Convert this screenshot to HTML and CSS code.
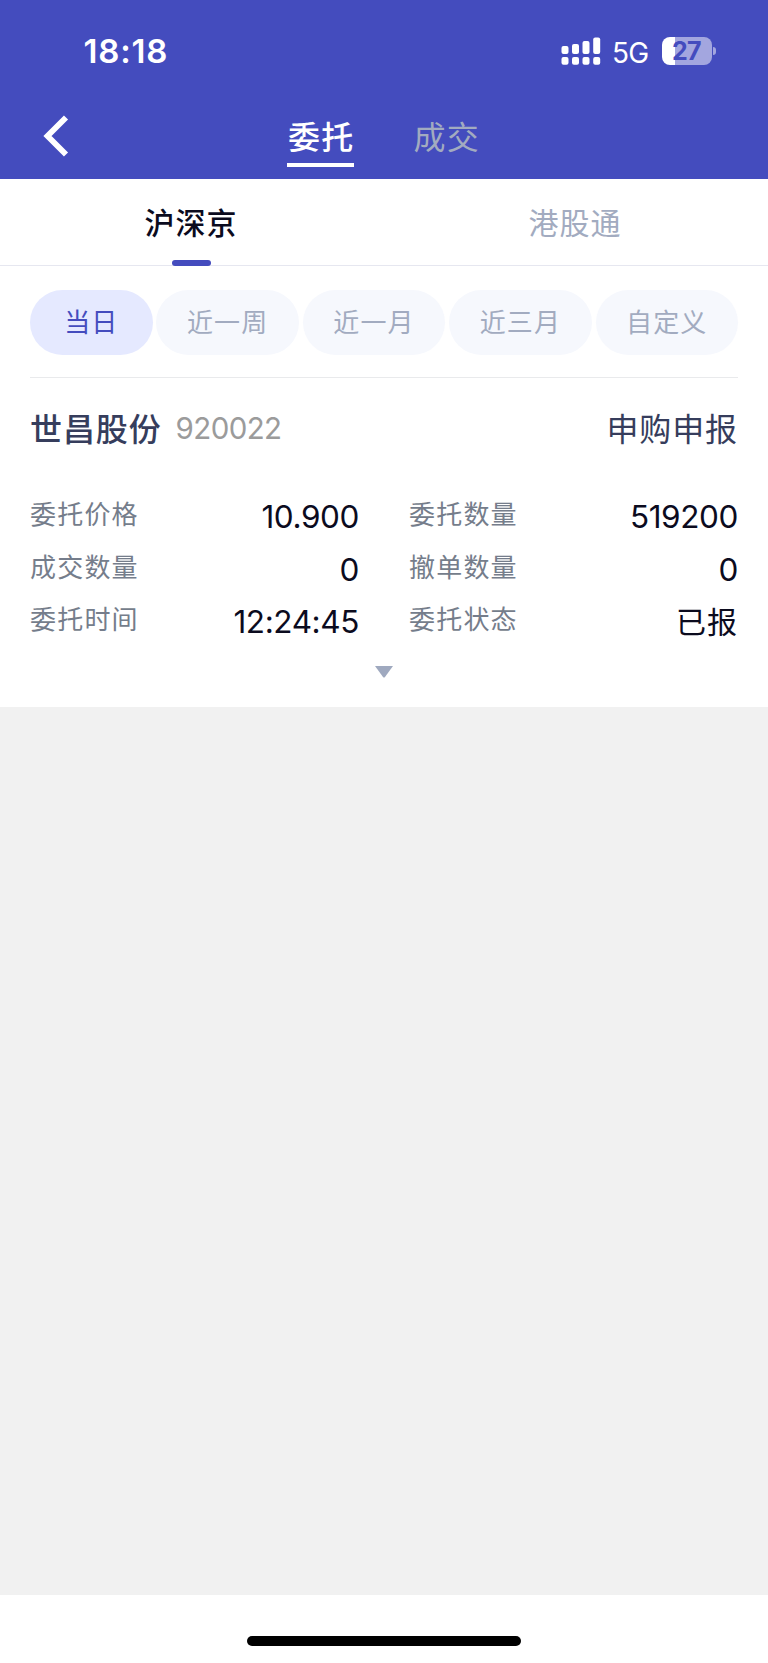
FILE: index.html
```html
<!DOCTYPE html>
<html lang="zh-CN">
<head>
    <meta charset="UTF-8">
    <meta name="viewport" content="width=device-width, initial-scale=1.0">
    <title>委托</title>
    <link rel="stylesheet" href="styles.css">
</head>
<body>
    <div class="page">
        <header class="header">
            <div class="status-bar">
                <span class="time">18:18</span>
                <div class="status-icons">
                    <svg class="signal" width="40" height="28" viewBox="0 0 40 28" fill="#fff">
                        <rect x="0.5" y="9" width="7" height="8" rx="2"/>
                        <rect x="11" y="7" width="7" height="10" rx="2"/>
                        <rect x="21.5" y="4" width="7" height="13" rx="2"/>
                        <rect x="32.2" y="0.5" width="7" height="16.5" rx="2"/>
                        <rect x="0.5" y="20" width="7" height="7.7" rx="2"/>
                        <rect x="11" y="20" width="7" height="7.7" rx="2"/>
                        <rect x="21.5" y="20" width="7" height="7.7" rx="2"/>
                        <rect x="32.2" y="20" width="7" height="7.7" rx="2"/>
                    </svg>
                    <span class="network">5G</span>
                    <div class="battery"><span>27</span></div>
                    <i class="battery-cap"></i>
                </div>
            </div>
            <nav class="nav">
                <svg class="back" width="26" height="42" viewBox="0 0 26 42">
                    <path d="M23 2.5 L4.5 21 L23 39.5" fill="none" stroke="#fff" stroke-width="5.8"/>
                </svg>
                <a class="nav-item active">委托</a>
                <a class="nav-item">成交</a>
            </nav>
        </header>

        <div class="tabs">
            <a class="tab active">沪深京</a>
            <a class="tab">港股通</a>
        </div>

        <div class="content">
            <div class="filters">
                <button class="chip short active">当日</button>
                <button class="chip">近一周</button>
                <button class="chip">近一月</button>
                <button class="chip">近三月</button>
                <button class="chip">自定义</button>
            </div>

            <div class="order-head">
                <span class="stock-name">世昌股份</span>
                <span class="stock-code">920022</span>
                <span class="order-type">申购申报</span>
            </div>

            <div class="order-grid">
                <div class="field"><span class="label">委托价格</span><span class="value">10.900</span></div>
                <div class="field"><span class="label">委托数量</span><span class="value">519200</span></div>
                <div class="field"><span class="label">成交数量</span><span class="value">0</span></div>
                <div class="field"><span class="label">撤单数量</span><span class="value">0</span></div>
                <div class="field"><span class="label">委托时间</span><span class="value">12:24:45</span></div>
                <div class="field"><span class="label">委托状态</span><span class="value cn">已报</span></div>
            </div>
            <svg class="expand" width="18" height="12" viewBox="0 0 18 12">
                <path d="M0 0H18L10 11Q9 12 8 11Z" fill="#9fa9bf"/>
            </svg>
        </div>

        <footer class="bottom"><div class="home-bar"></div></footer>
    </div>
</body>
</html>
```

FILE: styles.css
```css
:root {
    --primary: #444cbe;
    --muted: #a2abc0;
}

* {
    box-sizing: border-box;
}

body {
    margin: 0;
    font-family: Inter, 'Noto Sans CJK SC', sans-serif;
    background: #f1f1f1;
}

.page {
    display: flex;
    flex-direction: column;
    width: 768px;
    height: 1663px;
}

/* 顶部 */
.header {
    height: 179px;
    background: var(--primary);
    color: #fff;
}

.status-bar {
    display: flex;
    justify-content: space-between;
    align-items: center;
    height: 102px;
    padding: 0 52px 0 83.5px;
}

.time {
    font-size: 33px;
    font-weight: 600;
    letter-spacing: 0.8px;
}

.status-icons {
    display: flex;
    align-items: center;
}

.network {
    width: 37px;
    margin: 3px 13px 0 11px;
    font-size: 28px;
    letter-spacing: -0.8px;
}

.battery {
    display: flex;
    align-items: center;
    justify-content: center;
    width: 50px;
    height: 28px;
    border-radius: 8px;
    background: linear-gradient(90deg, #fff 13px, #a3a6df 13px);
    color: var(--primary);
    font-size: 25px;
    font-weight: 700;
    letter-spacing: -0.6px;
}

.battery span {
    margin-left: -1px;
}

.battery-cap {
    width: 3px;
    height: 8px;
    margin-left: 1px;
    border-radius: 0 4px 4px 0;
    background: #a3a6df;
}

.nav {
    display: flex;
    align-items: flex-start;
    height: 77px;
    padding: 13px 0 0 43px;
    line-height: 45px;
}

.nav-item {
    width: 67px;
    height: 52px;
    font-size: 32px;
    letter-spacing: 1.2px;
    padding-left: 1px;
    white-space: nowrap;
    color: #a2abc0;
}

.nav-item.active {
    margin: 0 58.5px 0 218px;
    border-bottom: 4px solid #fff;
    font-weight: 500;
    color: #fff;
}

/* 市场切换 */
.tabs {
    display: flex;
    height: 87px;
    background: #fff;
    border-bottom: 1px solid #e6e7f0;
}

.tab {
    display: flex;
    flex-direction: column;
    justify-content: space-between;
    align-items: center;
    flex: 1;
    height: 87px;
    padding: 22px 2px 0 0;
    line-height: 44px;
    font-size: 30px;
    letter-spacing: 1px;
    color: var(--muted);
}

.tab.active {
    color: #0b0b1e;
    font-weight: 500;
}

.tab.active::after {
    content: "";
    width: 39px;
    height: 6px;
    border-radius: 3px;
    background: var(--primary);
}

/* 委托列表 */
.content {
    height: 441px;
    padding: 24px 30px 0;
    background: #fff;
}

.filters {
    display: flex;
    justify-content: space-between;
    height: 88px;
    border-bottom: 1px solid #e9eaec;
}

.chip {
    width: 142.5px;
    height: 65px;
    padding: 0 0 4px;
    border: none;
    border-radius: 33px;
    background: #f6f8fd;
    color: var(--muted);
    font-family: inherit;
    font-size: 26px;
    letter-spacing: 1.1px;
}

.chip.short {
    width: 122.5px;
}

.chip.active {
    background: #e5e9ff;
    color: var(--primary);
}

.order-head {
    display: flex;
    align-items: center;
    height: 98px;
    color: #363d5c;
    font-size: 32px;
    letter-spacing: 0.9px;
}

.stock-name {
    font-weight: 500;
}

.stock-code {
    margin-left: 14px;
    padding-top: 2px;
    font-size: 29.5px;
    letter-spacing: -0.6px;
    color: #9b9b9b;
}

.order-type {
    margin-left: auto;
}

.order-grid {
    display: grid;
    grid-template-columns: 329px 329px;
    column-gap: 50px;
    grid-auto-rows: 52.7px;
    margin-top: 14px;
}

.field {
    display: flex;
    justify-content: space-between;
    line-height: 50px;
}

.label {
    font-size: 26px;
    letter-spacing: 1.2px;
    color: #757d8b;
}

.value {
    padding-top: 2px;
    font-size: 31.5px;
    letter-spacing: -0.4px;
    color: #0b0b1e;
}

.value.cn {
    font-size: 30px;
    letter-spacing: 1px;
}

.expand {
    display: block;
    margin: 18px auto 0;
}

/* 底部 */
.bottom {
    height: 68px;
    margin-top: auto;
    padding-top: 41px;
    background: #fff;
}

.home-bar {
    width: 274px;
    height: 10px;
    margin: 0 auto;
    border-radius: 5px;
    background: #000;
}
```
